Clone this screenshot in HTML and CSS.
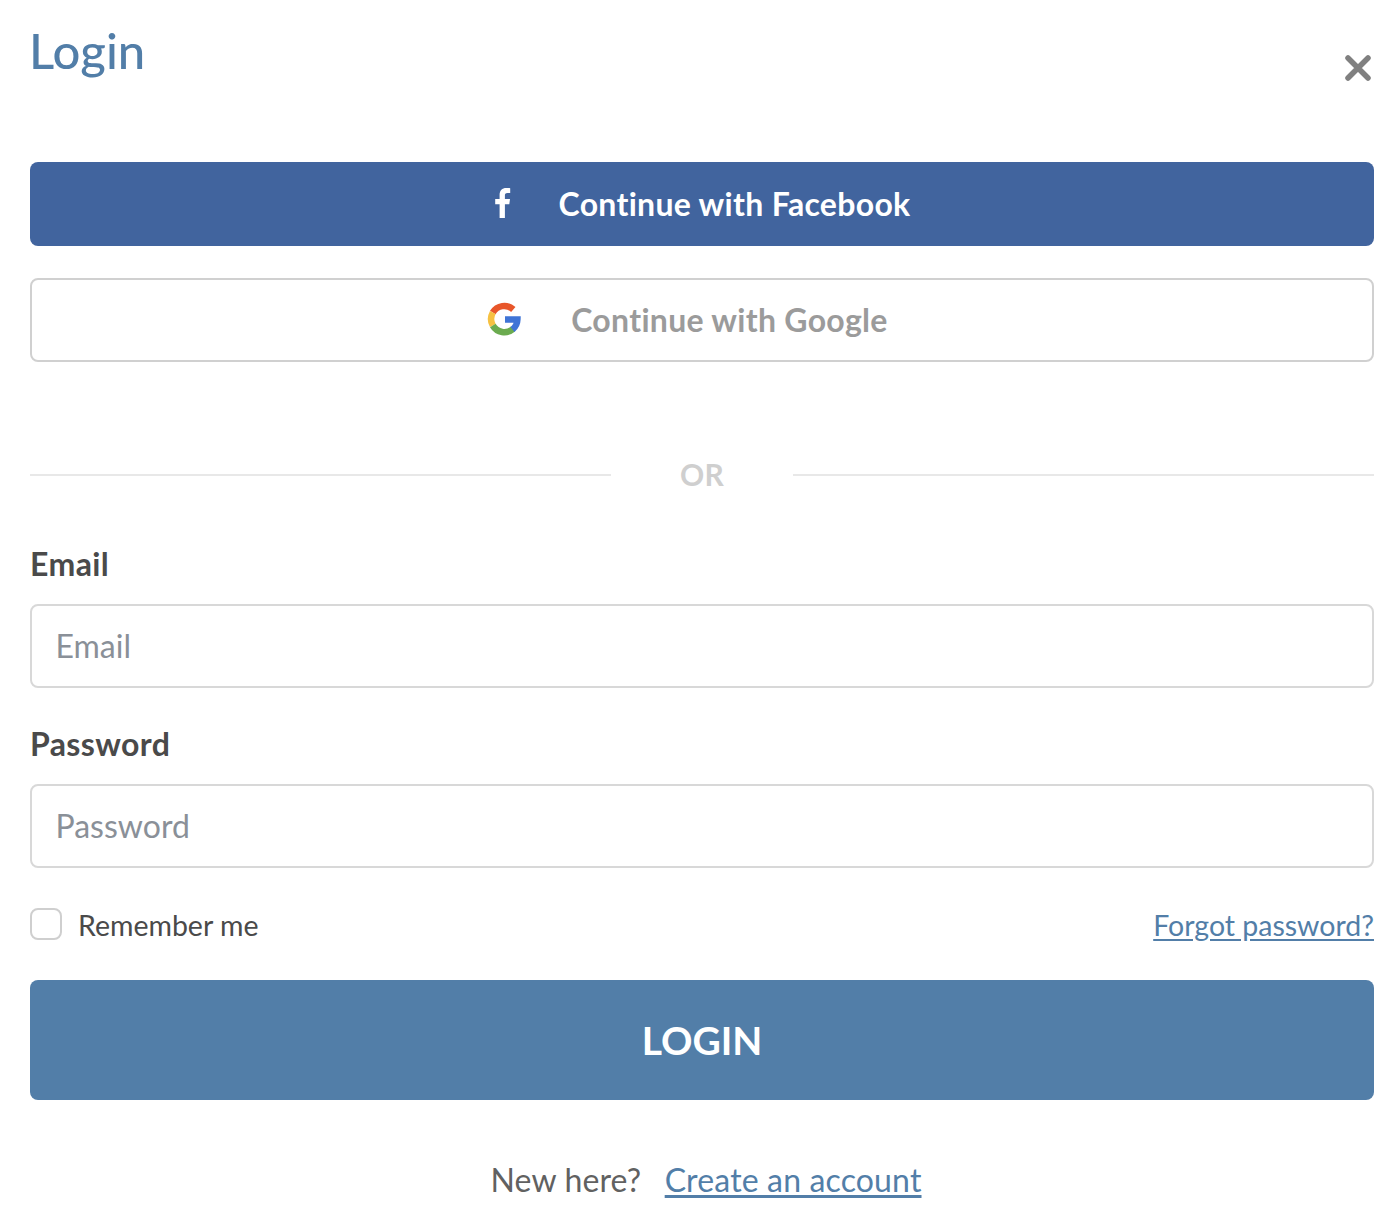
FILE: index.html
```html
<!DOCTYPE html>
<html lang="en">
<head>
<meta charset="utf-8">
<title>Login</title>
<link rel="stylesheet" href="styles.css">
</head>
<body>
<main class="modal">
  <header class="head">
    <h1 class="title">Login</h1>
    <button class="close" aria-label="Close">
      <svg width="28" height="28" viewBox="0 0 28 28"><path d="M4 4L24 24M24 4L4 24" stroke="#808080" stroke-width="5.500" stroke-linecap="round" fill="none"/></svg>
    </button>
  </header>
  <a class="social fb">
    <span class="social-icon fb-icon">
      <svg width="18" height="32" viewBox="0 0 18 32"><path fill="#fff" d="M5.600 31V17.300H1.200v-5.200h4.400V8C5.600 3.600 8.200 1 12.200 1c1.900 0 3.500.1 4 .2v4.800h-2.700c-2.200 0-2.600 1-2.600 2.500v3.600h5.100l-.7 5.200h-4.400V31z"/></svg>
    </span>
    <span class="social-text">Continue with Facebook</span>
  </a>
  <a class="social gg">
    <span class="social-icon gg-icon">
      <svg width="34" height="34" viewBox="0 0 34 34"><g fill="none" stroke-width="6.500"><path stroke="#e8562a" d="M5.800 10.500A13.400 13.400 0 0 1 26.300 7.500"/><path stroke="#f6c142" d="M5.800 23.500A13.400 13.400 0 0 1 5.800 10.500"/><path stroke="#6bab4f" d="M26 27A13.400 13.400 0 0 1 5.800 23.500"/><path stroke="#3f74d6" d="M18 17.500H30.400A13.400 13.400 0 0 1 25.500 27.500"/></g></svg>
    </span>
    <span class="social-text">Continue with Google</span>
  </a>
  <div class="divider"><span class="rule"></span><span class="or">OR</span><span class="rule"></span></div>
  <label class="label first" for="email">Email</label>
  <input class="field" id="email" type="text" placeholder="Email">
  <label class="label second" for="password">Password</label>
  <input class="field" id="password" type="password" placeholder="Password">
  <div class="options">
    <label class="remember"><span class="box"></span><span class="remember-text">Remember me</span></label>
    <a class="link forgot" href="#">Forgot password?</a>
  </div>
  <button class="login">LOGIN</button>
  <p class="foot">New here? <a class="link create" href="#">Create an account</a></p>
</main>
</body>
</html>
```
FILE: styles.css
```css
* { box-sizing: border-box; }
html, body { margin: 0; background: #fff; }
body { font-family: Lato, "Liberation Sans", sans-serif; color: #4a4a4a; font-variant-ligatures: none; }
.modal { width: 1399px; height: 1232px; padding: 0 25px 0 30px; }
.head { display: flex; justify-content: space-between; height: 162px; }
.title { margin: 20px 0 0 -1px; font-size: 49px; line-height: 60px; font-weight: 500; color: #527ea8; }
.close { margin: 54px 2px 0 0; padding: 0; width: 28px; height: 28px; border: 0; background: none; }
.social { display: flex; justify-content: center; align-items: center; height: 84px; border-radius: 8px; font-size: 32px; font-weight: 700; letter-spacing: 0.3px; }
.social-text { display: block; padding-bottom: 2px; }
.fb { background: #41649e; color: #fff; }
.fb-icon { margin-right: 47px; height: 32px; margin-top: -3px; }
.gg { margin-top: 32px; padding-right: 29px; border: 2px solid #d0d0d0; color: #9b9b9b; }
.gg-icon { margin-right: 50px; height: 34px; margin-top: -2px; }
.divider { display: flex; align-items: center; margin-top: 95px; height: 36px; }
.rule { flex: 1; height: 2px; background: #e8e8e8; }
.or { width: 182px; padding-bottom: 2px; text-align: center; font-size: 30px; font-weight: 700; color: #cfcfcf; letter-spacing: 0.3px; }
.label { display: block; font-size: 32px; line-height: 40px; font-weight: 700; color: #4a4a4a; letter-spacing: 0.4px; }
.first { margin-top: 51px; margin-bottom: 20px; }
.second { margin-top: 36px; margin-bottom: 20px; }
.field { display: block; width: 100%; height: 84px; padding: 0 24px 1px 23.500px; border: 2px solid #d8d8d8; border-radius: 8px; font: 400 32px Lato, sans-serif; color: #4a4a4a; outline: 0; background: #fff; }
.field::placeholder { color: #8a9098; opacity: 1; }
.options { display: flex; justify-content: space-between; align-items: center; margin-top: 40px; height: 32px; font-size: 28.500px; }
.remember { display: flex; align-items: center; gap: 16px; }
.remember-text { padding-top: 2px; }
.box { width: 32px; height: 32px; border: 2px solid #cfcfcf; border-radius: 8px; }
.link { color: #527ea8; text-decoration: underline; text-underline-offset: 3px; }
.forgot { padding-top: 2px; }
.login { display: block; width: 100%; height: 120px; margin-top: 40px; border: 0; border-radius: 8px; background: #527ea8; color: #fff; font: 700 39px Lato, sans-serif; font-variant-ligatures: none; }
.foot { margin: 59px 0 0; padding-left: 8px; text-align: center; font-size: 32px; line-height: 42px; color: #616161; letter-spacing: 0.15px; }
.create { margin-left: 15px; }
```
